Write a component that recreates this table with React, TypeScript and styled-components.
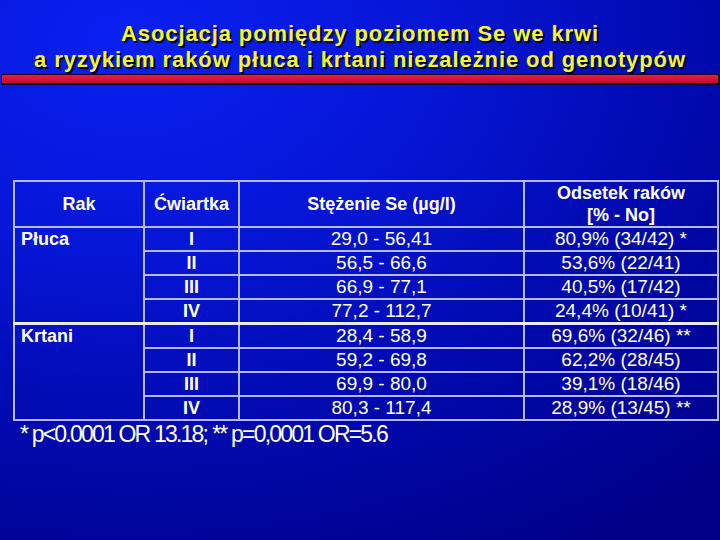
import React from "react";
import styled, { createGlobalStyle } from "styled-components";

const Global = createGlobalStyle`
  html, body { margin: 0; padding: 0; }
  body { width: 720px; height: 540px; overflow: hidden; }
`;

const Slide = styled.div`
  width: 720px;
  height: 540px;
  box-sizing: border-box;
  background: radial-gradient(ellipse 120% 110% at 18% 8%, #0a20f2 0%, #0616d6 35%, #0008a8 70%, #000088 100%);
  font-family: "Liberation Sans", Arial, sans-serif;
  display: flex;
  flex-direction: column;
  padding-top: 21px;
`;

const Title = styled.h1`
  margin: 0;
  color: #f6f532;
  font-size: 22px;
  line-height: 26px;
  font-weight: bold;
  text-align: center;
  text-shadow: 2px 2px 0 #000018;
  letter-spacing: 0.9px;
`;

const RedBar = styled.div`
  margin: 1px 1px 0 1px;
  height: 8px;
  background: linear-gradient(#e0204a, #c8082e);
  border: 1px solid #2a0010;
  box-shadow: 1px 1px 0 #000030;
`;

const Table = styled.table`
  margin: 96px 0 0 13px;
  width: 704px;
  border-collapse: collapse;
  color: #ffffff;
  font-size: 19px;
  table-layout: fixed;
`;

const Th = styled.th`
  border: 2px solid #b4b8ff;
  font-weight: bold;
  font-size: 18px;
  line-height: 22px;
  height: 43px;
  padding: 0 4px;
  text-align: center;
  vertical-align: middle;
`;

const Td = styled.td<{ $align?: string; $bold?: boolean; $thickTop?: boolean }>`
  border: 2px solid #b4b8ff;
  border-top: ${(p) => (p.$thickTop ? "3px solid #e8e8ff" : "2px solid #b4b8ff")};
  height: 22px;
  padding: 0 6px;
  line-height: 22px;
  text-align: ${(p) => p.$align || "center"};
  vertical-align: ${(p) => (p.$align === "left" ? "top" : "middle")};
  font-weight: ${(p) => (p.$bold ? "bold" : "normal")};
  font-size: ${(p) => (p.$bold ? "18px" : "19px")};
  white-space: nowrap;
`;

const Note = styled.div`
  margin: 0 0 0 20px;
  color: #ffffff;
  font-size: 23px;
  letter-spacing: -1.8px;
  line-height: 26px;
`;

const Gap = styled.span`
  margin-left: 5px;
`;

const groups = [
  {
    name: "Płuca",
    rows: [
      ["I", "29,0 - 56,41", "80,9% (34/42) *"],
      ["II", "56,5 - 66,6", "53,6% (22/41)"],
      ["III", "66,9 - 77,1", "40,5% (17/42)"],
      ["IV", "77,2 - 112,7", "24,4% (10/41) *"],
    ],
  },
  {
    name: "Krtani",
    rows: [
      ["I", "28,4 - 58,9", "69,6% (32/46) **"],
      ["II", "59,2 - 69,8", "62,2% (28/45)"],
      ["III", "69,9 - 80,0", "39,1% (18/46)"],
      ["IV", "80,3 - 117,4", "28,9% (13/45) **"],
    ],
  },
];

export default function App() {
  return (
    <>
      <Global />
      <Slide>
        <Title>
          Asocjacja pomiędzy poziomem Se we krwi
          <br />a ryzykiem raków płuca i krtani niezależnie od genotypów
        </Title>
        <RedBar />
        <Table>
          <colgroup>
            <col style={{ width: 130 }} />
            <col style={{ width: 95 }} />
            <col style={{ width: 285 }} />
            <col style={{ width: 194 }} />
          </colgroup>
          <thead>
            <tr>
              <Th>Rak</Th>
              <Th>Ćwiartka</Th>
              <Th>Stężenie Se (µg/l)</Th>
              <Th>
                Odsetek raków
                <br />[% - No]
              </Th>
            </tr>
          </thead>
          <tbody>
            {groups.map((g, gi) =>
              g.rows.map((r, ri) => (
                <tr key={g.name + ri}>
                  {ri === 0 && (
                    <Td rowSpan={4} $align="left" $bold $thickTop={gi > 0}>
                      {g.name}
                    </Td>
                  )}
                  <Td $bold $thickTop={gi > 0 && ri === 0}>{r[0]}</Td>
                  <Td $thickTop={gi > 0 && ri === 0}>{r[1]}</Td>
                  <Td $thickTop={gi > 0 && ri === 0}>{r[2]}</Td>
                </tr>
              ))
            )}
          </tbody>
        </Table>
        <Note>
          * p&lt;0.0001 OR 13.18;<Gap>** p=0,0001 OR=5.6</Gap>
        </Note>
      </Slide>
    </>
  );
}
